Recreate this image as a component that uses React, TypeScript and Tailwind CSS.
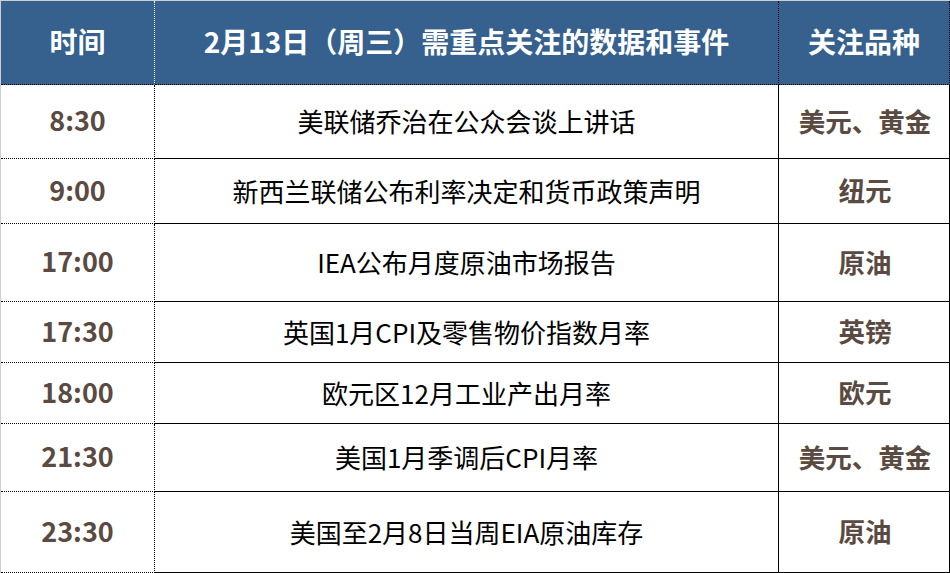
import React from "react";

interface Row {
  time: string;
  event: string;
  target: string;
  h: string;
}

const rows: Row[] = [
  { time: "8:30", event: "美联储乔治在公众会谈上讲话", target: "美元、黄金", h: "h-[74px]" },
  { time: "9:00", event: "新西兰联储公布利率决定和货币政策声明", target: "纽元", h: "h-[65px]" },
  { time: "17:00", event: "IEA公布月度原油市场报告", target: "原油", h: "h-[78px]" },
  { time: "17:30", event: "英国1月CPI及零售物价指数月率", target: "英镑", h: "h-[61px]" },
  { time: "18:00", event: "欧元区12月工业产出月率", target: "欧元", h: "h-[61px]" },
  { time: "21:30", event: "美国1月季调后CPI月率", target: "美元、黄金", h: "h-[68px]" },
  { time: "23:30", event: "美国至2月8日当周EIA原油库存", target: "原油", h: "h-[81px]" },
];

export default function App() {
  return (
    <div
      className="w-[950px] h-[573px] bg-white border-l border-[#cfcfcf] overflow-hidden"
      style={{ fontFamily: '"Noto Sans CJK SC", "Noto Sans", sans-serif' }}
    >
      {/* header */}
      <div className="flex h-[85px] border-t border-[#cfcfcf]">
        <div className="w-[154px] flex items-center justify-center pb-[4px] bg-[#36608e] border-r border-white border-b border-dotted border-b-black text-white font-bold text-[28px]">
          时间
        </div>
        <div className="w-[624px] flex items-center justify-center pb-[4px] bg-[#36608e] border-r border-dotted border-r-black border-b border-b-black text-white font-bold text-[28px]">
          2月13日（周三）需重点关注的数据和事件
        </div>
        <div className="w-[171px] flex items-center justify-center pb-[4px] bg-[#36608e] border-r border-dotted border-r-black border-b border-b-black text-white font-bold text-[28px]">
          关注品种
        </div>
      </div>

      {rows.map((r) => (
        <div key={r.time} className={`flex ${r.h}`}>
          <div className="w-[154px] flex items-center justify-center pb-[2px] border-r border-b border-dotted border-black text-[#5a4a41] font-bold text-[27px]">
            {r.time}
          </div>
          <div className="w-[624px] flex items-center justify-center pb-[2px] border-r border-b border-black text-black text-[26px]">
            {r.event}
          </div>
          <div className="w-[171px] flex items-center justify-center pb-[2px] border-b border-black border-r border-r-black text-[#5a4a41] font-bold text-[26.5px]">
            <span className="pl-[2px]">{r.target}</span>
          </div>
        </div>
      ))}
    </div>
  );
}
